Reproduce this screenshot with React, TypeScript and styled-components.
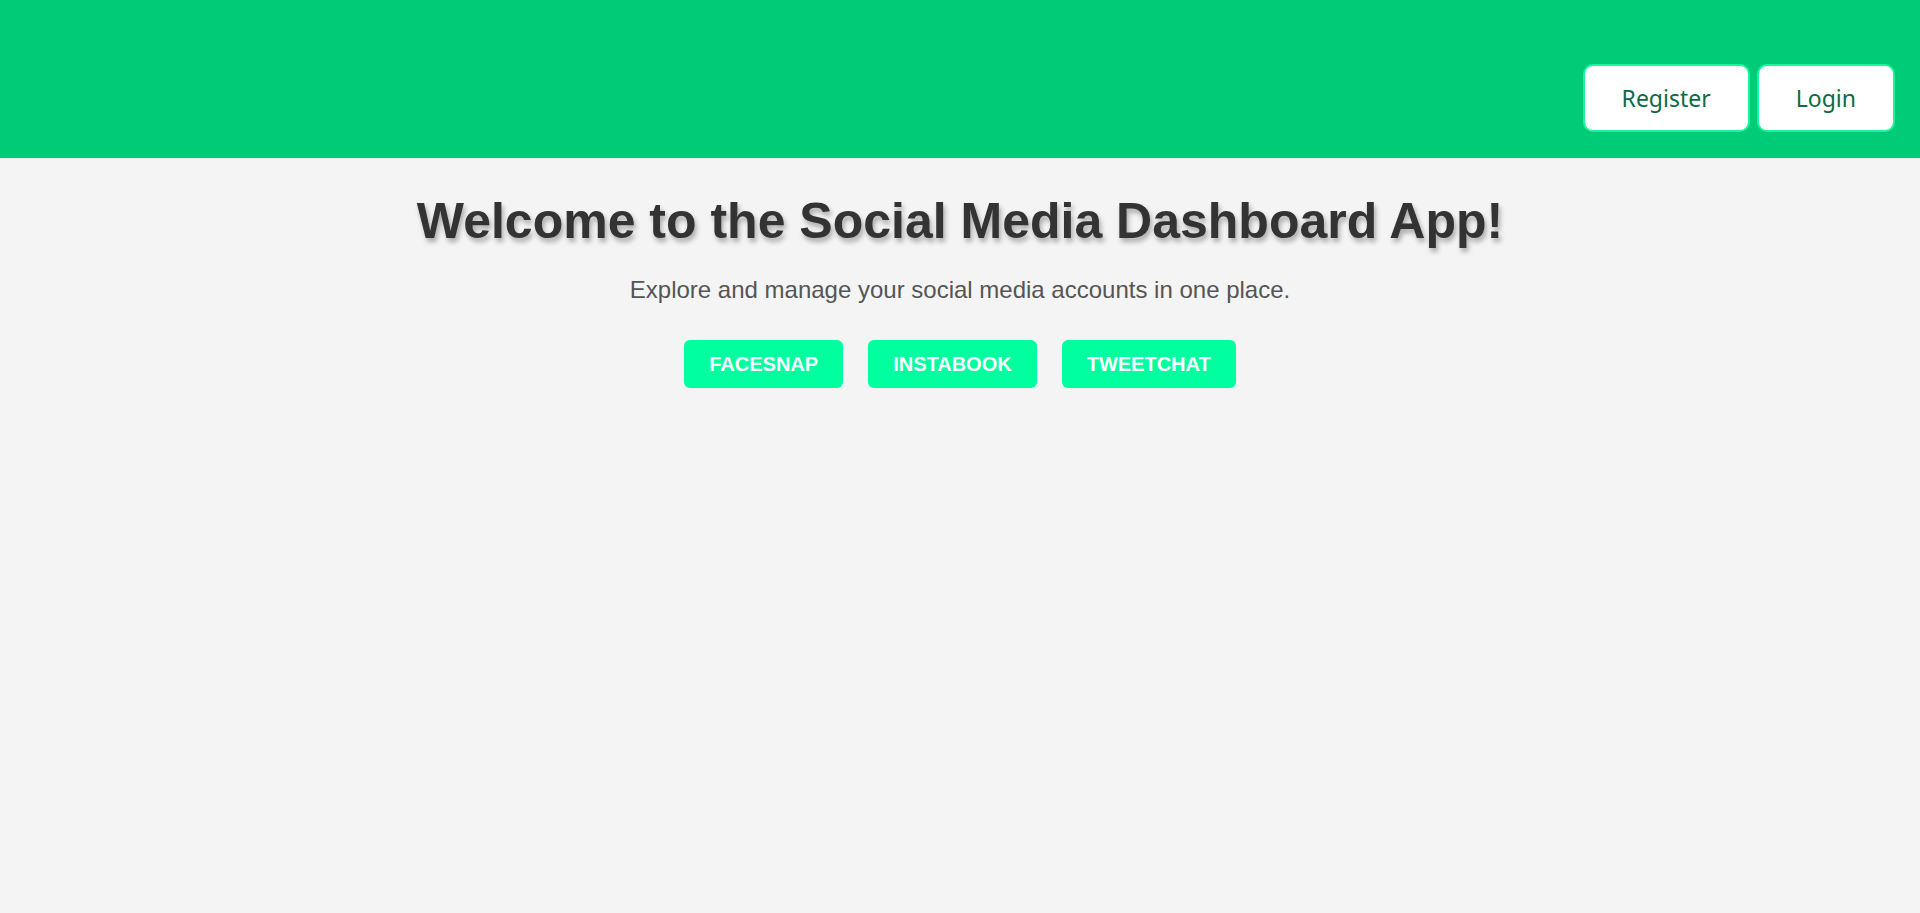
import React from 'react';
import styled, { createGlobalStyle } from 'styled-components';

const GlobalStyle = createGlobalStyle`
  html, body {
    margin: 0;
    padding: 0;
    background: #f4f4f4;
    font-family: 'Liberation Sans', Arial, sans-serif;
  }
`;

const Header = styled.header`
  height: 158px;
  background: #00cc78;
  display: flex;
  justify-content: flex-end;
  align-items: flex-start;
  gap: 7px;
  padding: 64px 25px 0 0;
  box-sizing: border-box;
`;

const NavButton = styled.button`
  height: 68px;
  padding: 0 37px;
  background: #ffffff;
  color: #0b6b45;
  border: 2px solid #1cf59c;
  border-radius: 10px;
  font-family: 'Noto Sans', 'Open Sans', sans-serif;
  font-size: 23px;
  cursor: pointer;
`;

const Main = styled.main`
  display: flex;
  flex-direction: column;
  align-items: center;
  padding-top: 34px;
`;

const Title = styled.h1`
  margin: 0;
  font-size: 50px;
  font-weight: bold;
  color: #333333;
  text-shadow: 2px 4px 5px rgba(0, 0, 0, 0.3);
`;

const Subtitle = styled.p`
  margin: 26px 0 0;
  font-size: 24px;
  color: #555555;
`;

const Platforms = styled.div`
  display: flex;
  gap: 25px;
  margin-top: 36px;
`;

const PlatformButton = styled.button`
  padding: 12px 25px;
  height: 48px;
  background: #00ff9f;
  color: #ffffff;
  border: none;
  border-radius: 6px;
  font-family: 'Liberation Sans', Arial, sans-serif;
  font-size: 20px;
  font-weight: bold;
  cursor: pointer;
`;

const platforms = ['FACESNAP', 'INSTABOOK', 'TWEETCHAT'];

export default function App() {
  return (
    <>
      <GlobalStyle />
      <Header>
        <NavButton>Register</NavButton>
        <NavButton>Login</NavButton>
      </Header>
      <Main>
        <Title>Welcome to the Social Media Dashboard App!</Title>
        <Subtitle>Explore and manage your social media accounts in one place.</Subtitle>
        <Platforms>
          {platforms.map((name) => (
            <PlatformButton key={name}>{name}</PlatformButton>
          ))}
        </Platforms>
      </Main>
    </>
  );
}
